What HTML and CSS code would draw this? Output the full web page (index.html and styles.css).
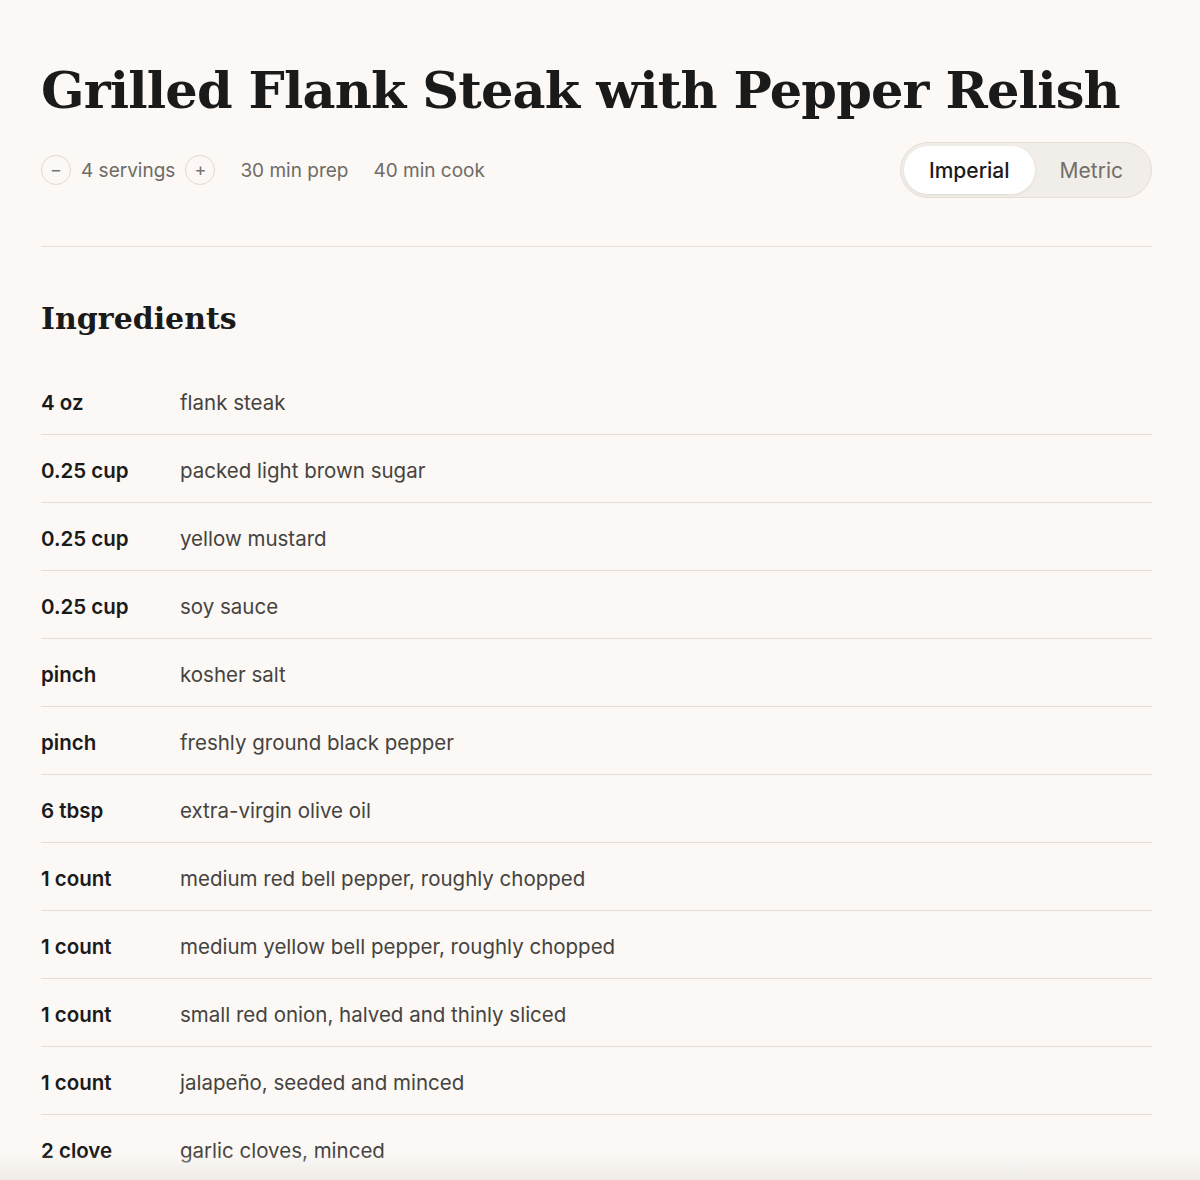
FILE: index.html
```html
<!DOCTYPE html>
<html lang="en">
<head>
    <meta charset="UTF-8">
    <meta name="viewport" content="width=device-width, initial-scale=1.0">
    <title>Grilled Flank Steak with Pepper Relish</title>
    <link rel="stylesheet" href="styles.css">
</head>
<body>
    <div id="recipe">
        <h1 class="recipe-title">Grilled Flank Steak with Pepper Relish</h1>

        <div class="recipe-meta">
            <div class="servings">
                <button class="step-btn" aria-label="Fewer servings">&minus;</button>
                <span>4 servings</span>
                <button class="step-btn" aria-label="More servings">+</button>
            </div>
            <span class="meta-item">30 min prep</span>
            <span class="meta-item">40 min cook</span>

            <div class="unit-toggle">
                <button class="unit active">Imperial</button>
                <button class="unit">Metric</button>
            </div>
        </div>

        <h2 class="section-title">Ingredients</h2>

        <ul class="ingredients">
            <li><span class="qty">4 oz</span><span class="item">flank steak</span></li>
            <li><span class="qty">0.25 cup</span><span class="item">packed light brown sugar</span></li>
            <li><span class="qty">0.25 cup</span><span class="item">yellow mustard</span></li>
            <li><span class="qty">0.25 cup</span><span class="item">soy sauce</span></li>
            <li><span class="qty">pinch</span><span class="item">kosher salt</span></li>
            <li><span class="qty">pinch</span><span class="item">freshly ground black pepper</span></li>
            <li><span class="qty">6 tbsp</span><span class="item">extra-virgin olive oil</span></li>
            <li><span class="qty">1 count</span><span class="item">medium red bell pepper, roughly chopped</span></li>
            <li><span class="qty">1 count</span><span class="item">medium yellow bell pepper, roughly chopped</span></li>
            <li><span class="qty">1 count</span><span class="item">small red onion, halved and thinly sliced</span></li>
            <li><span class="qty">1 count</span><span class="item">jalapeño, seeded and minced</span></li>
            <li><span class="qty">2 clove</span><span class="item">garlic cloves, minced</span></li>
        </ul>
    </div>

    <div class="bottom-fade"></div>
</body>
</html>
```

FILE: styles.css
```css
/* Reset */
* {
    margin: 0;
    padding: 0;
    box-sizing: border-box;
}

body {
    font-family: Inter, "Noto Sans", sans-serif;
    background: #fbf8f5;
    color: #1a1a1a;
}

#recipe {
    width: 1111px;
    margin-left: 41px;
    padding-top: 54px;
}

/* Title */
.recipe-title {
    font-family: "DejaVu Serif", Georgia, serif;
    font-size: 51px;
    font-weight: 700;
    line-height: 72px;
    letter-spacing: -0.85px;
    white-space: nowrap;
    color: #1a1a1a;
}

/* Meta row */
.recipe-meta {
    display: flex;
    align-items: center;
    margin-top: 16px;
    padding-bottom: 48px;
    border-bottom: 1px solid #e6e0d8;
    font-size: 19px;
    color: #6f6b66;
}

.servings {
    display: flex;
    align-items: center;
    gap: 10px;
    margin-right: 25px;
}

.step-btn {
    width: 30px;
    height: 30px;
    border-radius: 50%;
    border: 1.5px solid #e0d8cc;
    background: transparent;
    color: #77726c;
    font-family: inherit;
    font-size: 18px;
    line-height: 1;
    display: flex;
    align-items: center;
    justify-content: center;
}

.meta-item {
    margin-right: 25px;
}

.unit-toggle {
    margin-left: auto;
    display: flex;
    padding: 3px;
    border-radius: 28px;
    border: 1.5px solid #e6ded3;
    background: #f1ede8;
}

.unit {
    border: none;
    background: transparent;
    font-family: inherit;
    font-size: 21px;
    color: #716d68;
    height: 48px;
    padding: 0 25px;
    border-radius: 24px;
}

.unit.active {
    background: #fff;
    color: #1a1a1a;
    font-weight: 500;
    box-shadow: 0 1px 3px rgba(0, 0, 0, 0.08);
}

/* Ingredients */
.section-title {
    font-family: "DejaVu Serif", Georgia, serif;
    font-size: 30px;
    font-weight: 700;
    line-height: 40px;
    margin-top: 52px;
    margin-bottom: 28px;
}

.ingredients {
    list-style: none;
}

.ingredients li {
    display: flex;
    padding: 22px 0 18px;
    border-bottom: 1px solid #e3ddd5;
    font-size: 20.5px;
    line-height: 27px;
}

.qty {
    width: 139px;
    font-weight: 600;
    color: #1a1a1a;
}

.item {
    color: #454340;
}

.bottom-fade {
    position: fixed;
    left: 0;
    right: 0;
    bottom: 0;
    height: 26px;
    background: linear-gradient(to bottom, rgba(240, 236, 232, 0), rgba(238, 234, 230, 0.95));
}
```
